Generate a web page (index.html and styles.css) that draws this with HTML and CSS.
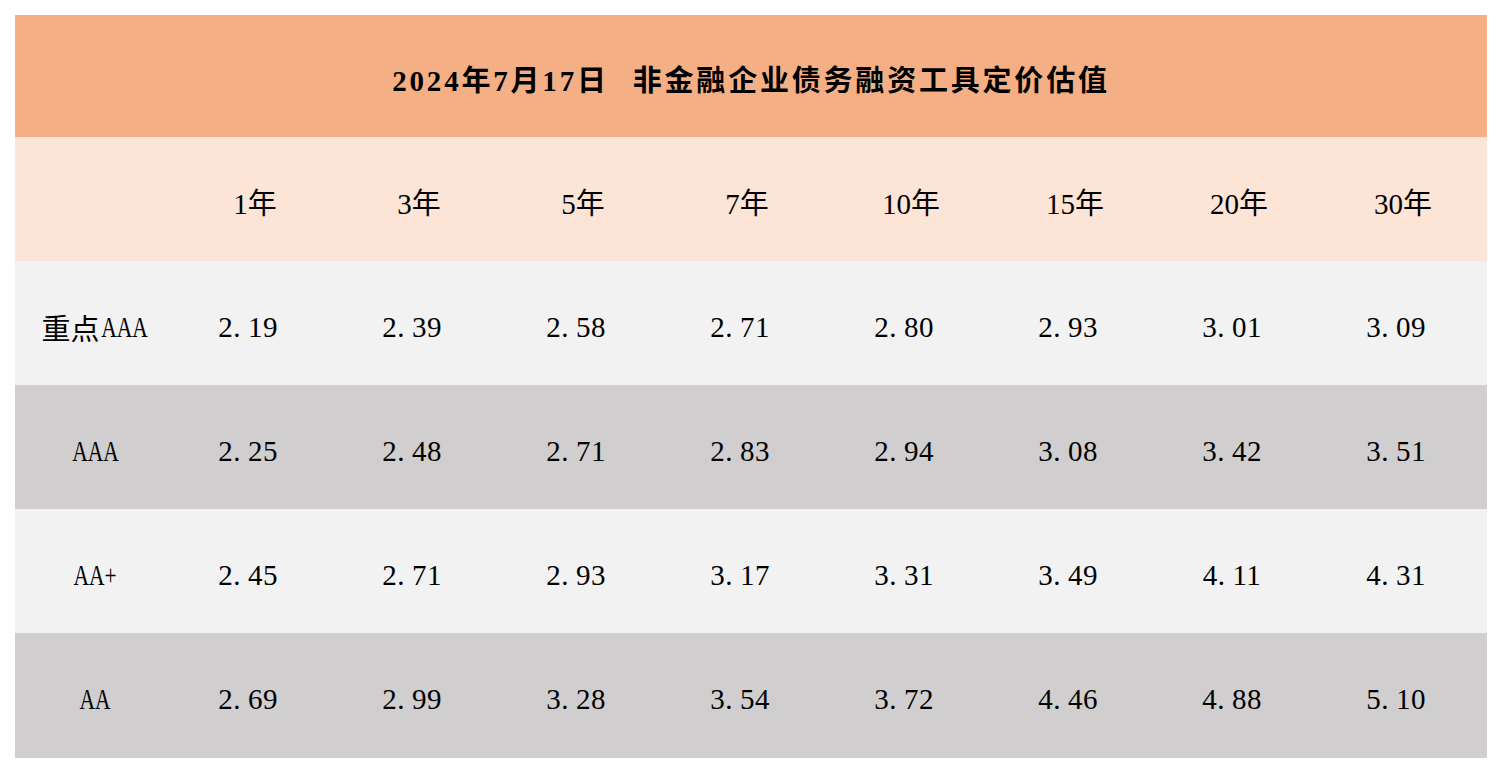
FILE: index.html
```html
<!DOCTYPE html>
<html lang="zh-CN">
<head>
<meta charset="utf-8">
<title>非金融企业债务融资工具定价估值</title>
<link rel="stylesheet" href="styles.css">
</head>
<body>
<div class="table">
  <div class="title">2024年7月17日<span class="gap"></span>非金融企业债务融资工具定价估值</div>

  <div class="row head">
    <div class="cell label"></div>
    <div class="cell yr">1年</div>
    <div class="cell yr">3年</div>
    <div class="cell yr">5年</div>
    <div class="cell yr">7年</div>
    <div class="cell yr">10年</div>
    <div class="cell yr">15年</div>
    <div class="cell yr">20年</div>
    <div class="cell yr">30年</div>
  </div>

  <div class="row light">
    <div class="cell label">重点<span class="lat">AAA</span></div>
    <div class="cell val">2<span class="pt">.</span>19</div>
    <div class="cell val">2<span class="pt">.</span>39</div>
    <div class="cell val">2<span class="pt">.</span>58</div>
    <div class="cell val">2<span class="pt">.</span>71</div>
    <div class="cell val">2<span class="pt">.</span>80</div>
    <div class="cell val">2<span class="pt">.</span>93</div>
    <div class="cell val">3<span class="pt">.</span>01</div>
    <div class="cell val">3<span class="pt">.</span>09</div>
  </div>

  <div class="row dark">
    <div class="cell label"><span class="lat">AAA</span></div>
    <div class="cell val">2<span class="pt">.</span>25</div>
    <div class="cell val">2<span class="pt">.</span>48</div>
    <div class="cell val">2<span class="pt">.</span>71</div>
    <div class="cell val">2<span class="pt">.</span>83</div>
    <div class="cell val">2<span class="pt">.</span>94</div>
    <div class="cell val">3<span class="pt">.</span>08</div>
    <div class="cell val">3<span class="pt">.</span>42</div>
    <div class="cell val">3<span class="pt">.</span>51</div>
  </div>

  <div class="row light">
    <div class="cell label"><span class="lat">AA+</span></div>
    <div class="cell val">2<span class="pt">.</span>45</div>
    <div class="cell val">2<span class="pt">.</span>71</div>
    <div class="cell val">2<span class="pt">.</span>93</div>
    <div class="cell val">3<span class="pt">.</span>17</div>
    <div class="cell val">3<span class="pt">.</span>31</div>
    <div class="cell val">3<span class="pt">.</span>49</div>
    <div class="cell val">4<span class="pt">.</span>11</div>
    <div class="cell val">4<span class="pt">.</span>31</div>
  </div>

  <div class="row dark last">
    <div class="cell label"><span class="lat">AA</span></div>
    <div class="cell val">2<span class="pt">.</span>69</div>
    <div class="cell val">2<span class="pt">.</span>99</div>
    <div class="cell val">3<span class="pt">.</span>28</div>
    <div class="cell val">3<span class="pt">.</span>54</div>
    <div class="cell val">3<span class="pt">.</span>72</div>
    <div class="cell val">4<span class="pt">.</span>46</div>
    <div class="cell val">4<span class="pt">.</span>88</div>
    <div class="cell val">5<span class="pt">.</span>10</div>
  </div>
</div>
</body>
</html>
```

FILE: styles.css
```css
html, body {
  margin: 0;
  padding: 0;
  background: #ffffff;
}

body {
  font-family: "Liberation Serif", "Noto Sans CJK SC", serif;
  color: #000000;
}

.table {
  width: 1472px;
  margin: 15px 0 0 15px;
}

.title {
  height: 122px;
  background: #F4B084;
  display: flex;
  align-items: center;
  justify-content: center;
  padding-top: 3px;
  box-sizing: border-box;
  font-size: 29px;
  font-weight: bold;
  letter-spacing: 2.8px;
}

.title .gap {
  display: inline-block;
  width: 24px;
}

.row {
  display: grid;
  grid-template-columns: 160px repeat(8, 164px);
  height: 124px;
}

.row.last {
  height: 125px;
}

.head {
  background: #FCE4D6;
}

.light {
  background: #F2F2F2;
}

.dark {
  background: #D0CECE;
}

.cell {
  display: flex;
  align-items: center;
  justify-content: center;
  padding-top: 8px;
  box-sizing: border-box;
  font-size: 29px;
  white-space: nowrap;
}

.head .cell {
  padding-top: 3px;
}

.yr {
  padding-right: 4px;
}

.val {
  padding-right: 18px;
  letter-spacing: 0.5px;
}

.pt {
  margin-right: 7px;
}

.lat {
  display: inline-block;
  transform: scaleX(0.74);
  transform-origin: center;
  margin: 0 -7px;
}
```
